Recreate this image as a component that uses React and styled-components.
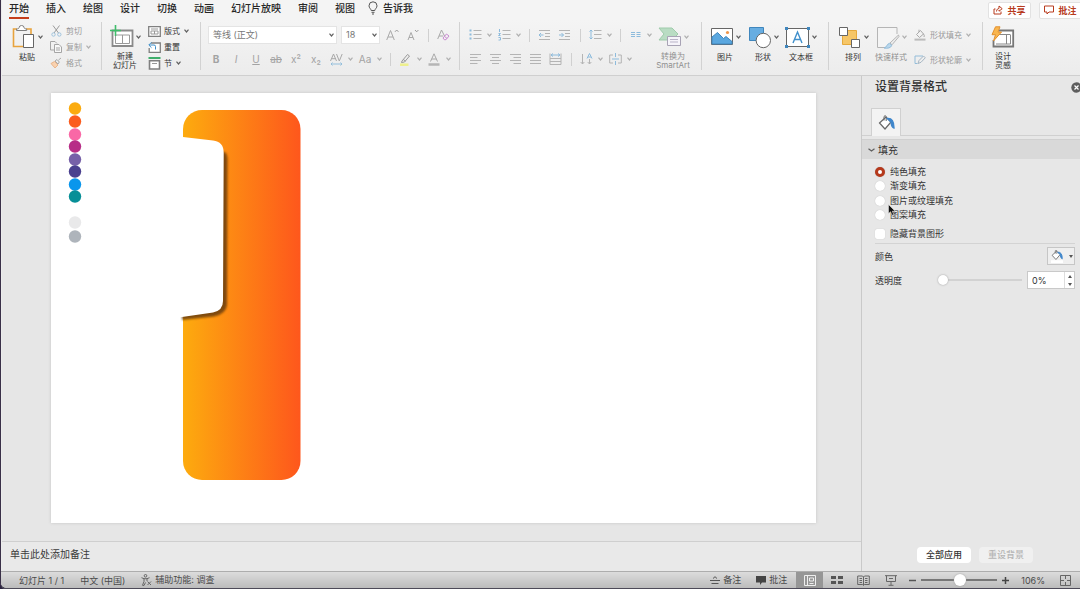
import React, { useState } from 'react';
import styled, { createGlobalStyle } from 'styled-components';

const GlobalStyle = createGlobalStyle`
  * {
    box-sizing: border-box;
  }
  body {
    margin: 0;
    background: #2b2440;
    font-family: Inter, "Noto Sans CJK SC", sans-serif;
    font-size: 9px;
    color: #333;
  }
  button, input, select {
    font-family: inherit;
    font-size: inherit;
    color: inherit;
    margin: 0;
    padding: 0;
    border: 0;
    background: none;
  }
  svg {
    display: block;
    flex: none;
  }
`;

const AppWindow = styled.div`
  display: flex;
  flex-direction: column;
  min-height: 100vh;
  padding-left: 1px;
  border-left: 1px solid #3a3048;
  border-bottom: 2px solid #4d4a58;
  border-bottom-left-radius: 7px;
  overflow: hidden;
  background: #ececec;
`;

const TopBar = styled.header`
  display: flex;
  align-items: center;
  justify-content: space-between;
  height: 20px;
  padding-left: 7px;
  background: #f4f4f4;
`;

const Tabs = styled.nav`
  display: flex;
  gap: 17px;
`;

const Tab = styled.a`
  height: 18px;
  border-bottom: 2px solid ${(props) => (props.$active ? '#c43e1c' : 'transparent')};
  color: #262626;
  font-size: 10px;
  font-weight: 500;
  line-height: 14px;
  text-decoration: none;
`;

const TellMe = styled.button`
  display: flex;
  gap: 5px;
  height: 14px;
  margin-left: -4px;
  color: #262626;
  font-size: 10px;
  font-weight: 500;
  line-height: 14px;
`;

const ShareGroup = styled.div`
  display: flex;
  gap: 8px;
  margin-right: -2px;
`;

const ShareButton = styled.button`
  display: flex;
  align-items: center;
  justify-content: center;
  gap: 4px;
  width: 43px;
  height: 17px;
  border: 1px solid #e2e2e2;
  border-radius: 2px;
  background: #fff;
  color: #b83b1d;
  font-weight: 700;
`;

const Ribbon = styled.div`
  display: flex;
  height: 56px;
  padding-top: 2px;
  border-bottom: 1px solid #cfcfcf;
  background: linear-gradient(#f4f4f4, #ececec);
`;

const Group = styled.section`
  display: flex;
  flex: none;
  width: ${(props) => props.$width}px;
  height: 48px;
  padding-left: ${(props) => props.$pad || 5}px;
  border-right: 1px solid ${(props) => (props.$last ? 'transparent' : '#d2d2d2')};
`;

const BigButton = styled.button`
  display: flex;
  flex-direction: column;
  align-items: center;
  width: ${(props) => props.$width || 38}px;
  height: 48px;
  padding-top: 2px;
  color: ${(props) => (props.$dim ? '#8f8f8f' : '#333')};
  font-size: 8px;
  line-height: 9px;
  white-space: nowrap;
`;

const BigIcon = styled.span`
  display: flex;
  align-items: center;
  gap: 2px;
  height: 26px;
  margin-bottom: 3px;
`;

const Stack = styled.div`
  display: flex;
  flex-direction: column;
  justify-content: ${(props) => (props.$spread ? 'space-between' : 'flex-start')};
  padding: ${(props) => (props.$spread ? '5px 0 2px 4px' : '1px 0 0 4px')};
`;

const SmallButton = styled.button`
  display: flex;
  align-items: center;
  gap: 4px;
  height: 16px;
  color: ${(props) => (props.$dim ? '#9a9a9a' : '#333')};
  font-size: 8px;
  line-height: 16px;
  white-space: nowrap;
`;

const SmallIcon = styled.span`
  display: flex;
  justify-content: center;
  width: 12px;
`;

const ToolRows = styled.div`
  display: flex;
  flex-direction: column;
  gap: 6px;
  padding-top: 4px;
`;

const ToolRow = styled.div`
  display: flex;
  align-items: center;
  height: 18px;
`;

const Tool = styled.button`
  display: flex;
  align-items: center;
  justify-content: center;
  width: 20px;
  height: 18px;
  color: #a3a3a3;
  font-size: 10px;
  font-weight: ${(props) => (props.$bold ? 700 : 400)};
  font-style: ${(props) => (props.$italic ? 'italic' : 'normal')};
  text-decoration: ${(props) => props.$line || 'none'};
`;

const MenuArrow = styled.button`
  display: flex;
  justify-content: center;
  width: 9px;
`;

const ToolDivider = styled.span`
  width: 1px;
  height: 13px;
  margin: 0 4px 0 6px;
  background: #d0d0d0;
`;

const SelectBox = styled.label`
  display: flex;
  align-items: center;
  width: ${(props) => props.$width}px;
  height: 18px;
  margin: 0 2px;
  padding: 0 2px 0 4px;
  border: 1px solid #e4e4e4;
  background: #fff;
  color: #777;

  select {
    flex: 1;
    min-width: 0;
    appearance: none;
    outline: none;
    font-size: 9px;
    line-height: 16px;
  }
`;

const Main = styled.main`
  display: flex;
  flex: 1;
`;

const Editor = styled.div`
  display: flex;
  flex: 1;
  flex-direction: column;
  min-width: 0;
`;

const Workspace = styled.div`
  flex: 1;
  padding: 17px 45px 18px 49px;
  background: #e6e6e6;
`;

const Slide = styled.div`
  background: #fff;
  box-shadow: 0 0 3px #c4c4c4;

  svg {
    width: 100%;
    height: auto;
  }
`;

const Notes = styled.div`
  height: 30px;
  padding-left: 8px;
  border-top: 1px solid #cfcfcf;
  background: #e9e9e9;
  color: #3a3a3a;
  font-size: 10px;
  line-height: 24px;
`;

const Panel = styled.aside`
  display: flex;
  flex-direction: column;
  flex: none;
  width: 219px;
  border-left: 1px solid #c9c9c9;
  background: #e7e7e7;
`;

const PanelHeader = styled.div`
  display: flex;
  align-items: center;
  justify-content: space-between;
  height: 22px;
  margin-right: -2px;
  padding-left: 13px;

  h2 {
    margin: 0;
    font-size: 12px;
    font-weight: 500;
    line-height: 22px;
  }
`;

const PanelTabs = styled.div`
  display: flex;
  height: 38px;
  padding: 10px 0 0 9px;
  border-bottom: 1px solid #d0d0d0;
`;

const PanelTab = styled.button`
  display: flex;
  align-items: center;
  justify-content: center;
  width: 30px;
  height: 28px;
  border: 1px solid #d0d0d0;
  border-bottom: 0;
  background: #f3f3f3;
`;

const SectionHeader = styled.button`
  display: flex;
  align-items: center;
  gap: 3px;
  height: 20px;
  margin-top: 3px;
  padding-left: 6px;
  border-top: 1px solid #d0d0d0;
  background: #d9d9d9;
  color: #333;
  font-size: 10px;
  line-height: 18px;
`;

const FillOptions = styled.div`
  position: relative;
  display: flex;
  flex-direction: column;
  margin: 6px 5px 0 13px;
  border-bottom: 1px solid #d3d3d3;
`;

const Option = styled.label`
  display: flex;
  align-items: center;
  gap: 5px;
  height: ${(props) => (props.$tall ? 18 : 14)}px;
  margin-top: ${(props) => (props.$tall ? 3 : 0)}px;
  line-height: 14px;

  &:nth-child(3) {
    margin-top: 1px;
  }

  input {
    appearance: none;
    width: 10px;
    height: 10px;
    background: #fff;
    box-shadow: 0 0 1px #b5b5b5;
  }
  input[type='radio'] {
    border-radius: 50%;
  }
  input[type='radio']:checked {
    border: 3px solid #b5391c;
  }
  input[type='checkbox'] {
    border-radius: 2px;
  }
  input[type='checkbox']:checked {
    background: #b5391c;
  }
`;

const Pointer = styled.span`
  position: absolute;
  left: 13px;
  top: 39px;
`;

const Field = styled.div`
  display: flex;
  align-items: center;
  justify-content: space-between;
  height: 24px;
  padding: 0 5px 0 13px;
`;

const ColorButton = styled.button`
  display: flex;
  align-items: center;
  justify-content: center;
  gap: 5px;
  width: 28px;
  height: 18px;
  border: 1px solid #c6c6c6;
  background: #efefef;
`;

const Range = styled.input`
  appearance: none;
  width: ${(props) => props.$width}px;
  height: 12px;

  &::-webkit-slider-runnable-track {
    height: 2px;
    background: ${(props) => props.$track};
  }
  &::-webkit-slider-thumb {
    appearance: none;
    width: ${(props) => props.$thumb}px;
    height: ${(props) => props.$thumb}px;
    margin-top: ${(props) => 1 - props.$thumb / 2}px;
    border-radius: 50%;
    background: #fff;
    box-shadow: 0 0 2px #999;
  }
`;

const FieldRange = styled.div`
  display: flex;
  flex: 1;
  justify-content: flex-end;
  padding-right: 5px;
`;

const Spinner = styled.div`
  display: flex;
  width: 48px;
  height: 18px;
  border: 1px solid #c9c9c9;
  background: #fff;

  input {
    flex: 1;
    min-width: 0;
    padding-left: 4px;
    outline: none;
  }
`;

const Steps = styled.div`
  display: flex;
  flex-direction: column;
  justify-content: space-around;
  width: 10px;
  border-left: 1px solid #ddd;

  button {
    display: flex;
    justify-content: center;
  }
`;

const PanelFooter = styled.div`
  display: flex;
  justify-content: flex-end;
  gap: 8px;
  margin-top: auto;
  padding: 0 47px 8px 0;
`;

const PillButton = styled.button`
  width: 54px;
  height: 16px;
  border-radius: 4px;
  background: ${(props) => (props.disabled ? '#f0f0f0' : '#fff')};
  color: ${(props) => (props.disabled ? '#b4b4b4' : '#333')};
  font-weight: 500;
  line-height: 16px;
`;

const StatusBar = styled.footer`
  display: flex;
  align-items: center;
  justify-content: space-between;
  height: 17px;
  margin-left: -1px;
  padding: 0 9px 0 18px;
  border-top: 1px solid #adadad;
  background: linear-gradient(#dcdcdc, #bcbcbc);
  color: #4a4a4a;
`;

const StatusSide = styled.div`
  display: flex;
  align-items: center;
  gap: ${(props) => props.$gap}px;
`;

const StatusButton = styled.button`
  display: flex;
  align-items: center;
  gap: 3px;
  height: 16px;
  line-height: 16px;
`;

const StatusToggles = styled.div`
  display: flex;
  gap: 15px;
  padding-right: 9px;
`;

const ViewButton = styled.button`
  display: flex;
  align-items: center;
  justify-content: center;
  width: 27px;
  height: 16px;
  background: ${(props) => (props.$active ? '#969696' : 'transparent')};
`;

const Zoom = styled.div`
  display: flex;
  align-items: center;
  gap: 5px;
  padding-left: 5px;

  output {
    margin: 0 10px 0 7px;
  }
`;

const Icon = ({ w, h, children, stroke = '#808080', ...rest }) => (
  <svg width={w} height={h} viewBox={`0 0 ${w} ${h}`} fill="none" stroke={stroke} aria-hidden="true" {...rest}>
    {children}
  </svg>
);

const Chevron = ({ dim, size = 5 }) => (
  <Icon w={size} h={4} stroke={dim ? '#b0b0b0' : '#606060'} strokeWidth="1.2">
    <path d={`M.5 .7 L${size / 2} 3 L${size - 0.5} .7`} />
  </Icon>
);

const More = ({ label }) => (
  <MenuArrow aria-label={label}>
    <Chevron dim />
  </MenuArrow>
);

const BulbIcon = () => (
  <Icon w={10} h={14} stroke="#555">
    <path d="M3.2 9.5 C3 7.8 1 7 1 4.8 A4 4 0 0 1 9 4.8 C9 7 7 7.8 6.8 9.5 Z M3.5 11.3 H6.5 M4 13 H6" />
  </Icon>
);

const ShareIcon = () => (
  <Icon w={10} h={10} stroke="#b83b1d">
    <path d="M2.5 4 H1 V9 H8 V6.5 M3.5 6.5 C3.7 4.2 5 3.4 6 3.4 V1 L9.2 3.7 L6 6.2 V4.800" />
  </Icon>
);

const CommentIcon = () => (
  <Icon w={10} h={10} stroke="#b83b1d">
    <path d="M.5 1 H9.5 V7 H5 L3 9 V7 H.5 Z" />
  </Icon>
);

const PasteIcon = () => (
  <Icon w={24} h={24}>
    <path d="M5 4 H1.5 V21.5 H11 M14 4 H19 V9" stroke="#e8a33d" strokeWidth="1.6" />
    <path d="M4.5 5.5 V4 C6 4 7 3.5 7.2 2.5 A2.4 2 0 0 1 12 2.5 C12.2 3.5 13.5 4 14.7 4 V5.5 Z" fill="#fff" />
    <path d="M11.5 9.5 H21.5 V22.5 H11.5 Z" fill="#fff" stroke="#666" />
  </Icon>
);

const CutIcon = () => (
  <Icon w={11} h={12} stroke="#9a9a9a">
    <path d="M2 .5 L7.5 8 M8.500 .5 L3 8" />
    <circle cx="2.5" cy="9.5" r="1.7" stroke="#9fc3dd" />
    <circle cx="8.3" cy="9.5" r="1.7" stroke="#9fc3dd" />
  </Icon>
);

const CopyIcon = () => (
  <Icon w={12} h={12} stroke="#a5a5a5">
    <path d="M4 9 H.5 V.5 H5 L7 2.5" />
    <path d="M4.5 3.5 H9 L11.5 6 V11.5 H4.5 Z M6 7 H10 M6 9 H10" fill="#f8f8f8" />
  </Icon>
);

const BrushIcon = () => (
  <Icon w={12} h={12} stroke="#aaa">
    <path d="M1 6.5 L4.5 4.5 L8 8 L5 11 Z" fill="#f9d2b0" stroke="#e9b58c" />
    <path d="M5 4 L7 2.5 L9.3 5 L8 7 Z M8.5 3 L11 1" fill="#eee" />
  </Icon>
);

const NewSlideIcon = () => (
  <Icon w={24} h={23}>
    <path d="M2.5 5.5 H22.5 V21 H2.5 Z" fill="#fff" stroke="#8a8a8a" strokeWidth="1.8" />
    <path d="M5.500 10 H19.500 V18.500 H5.500 Z M12.500 10 V18.500" stroke="#9a9a9a" />
    <path d="M0 5.500 H11 M5.500 0 V11" stroke="#3fbe6b" strokeWidth="1.6" />
  </Icon>
);

const LayoutIcon = () => (
  <Icon w={13} h={11}>
    <path d="M.7 .7 H12.3 V10.3 H.7 Z" fill="#fff" strokeWidth="1.3" />
    <path d="M3 3 H10 M3 5 H10 V8 H3 Z M6.5 5 V8" stroke="#999" />
  </Icon>
);

const ResetIcon = () => (
  <Icon w={13} h={12}>
    <path d="M3 2 H12.3 V11.3 H1.2 V7" fill="#fff" strokeWidth="1.3" />
    <path d="M7.5 8.5 V5.5 Q7.5 4 6 4 H1 M3.5 1.3 L.8 4 L3.5 6.7" stroke="#3f8fcb" />
  </Icon>
);

const SectionIcon = () => (
  <Icon w={13} h={13}>
    <path d="M.5 1 H12.5" stroke="#3fae6b" strokeWidth="2" />
    <path d="M1.500 3.700 H11.500 V12 H1.500 Z" fill="#fff" strokeWidth="1.6" />
    <path d="M4 6.500 H9" stroke="#999" />
  </Icon>
);

const FontSizeIcon = ({ up }) => (
  <Icon w={13} h={12} stroke="#a8a8a8">
    <path d={up ? 'M.7 11 L4.5 1.5 L8.3 11 M2 8 H7' : 'M2 11 L5 3.5 L8 11 M3 8.5 H7'} />
    <path d={up ? 'M9 2.8 L10.7 1 L12.4 2.8' : 'M9 1 L10.7 2.8 L12.4 1'} stroke="#9a9a9a" />
  </Icon>
);

const ClearFormatIcon = () => (
  <Icon w={13} h={12} stroke="#a8a8a8">
    <path d="M.7 10 L4.5 1 L7.5 7 M2 7 H6" />
    <path d="M6 9 L9.5 5 L12 7 L9 10.7 H7.3 Z M7.5 7.3 L10 9.5" stroke="#c98ad0" />
  </Icon>
);

const SpacingIcon = () => (
  <Icon w={13} h={13} stroke="#a8a8a8">
    <path d="M.5 8 L3.5 1 L6.5 8 M1.5 5.7 H5.5 M6.5 1 L9.3 8 L12.2 1" />
    <path d="M1 11 H12 M2.5 9.5 L1 11 L2.5 12.5 M10.5 9.5 L12 11 L10.5 12.5" stroke="#94bfdc" />
  </Icon>
);

const HighlightIcon = () => (
  <Icon w={12} h={13} stroke="#999">
    <path d="M3 8 L8.5 1.5 L10.5 3 L5.5 9 L2.5 9.5 Z M4.2 6.5 L6.5 8" />
    <path d="M1 11.7 H9.5" stroke="#eef08c" strokeWidth="2.5" />
  </Icon>
);

const FontColorIcon = () => (
  <Icon w={12} h={13} stroke="#a8a8a8">
    <path d="M2.5 8.5 L6 .8 L9.5 8.5 M3.7 6 H8.3" />
    <path d="M.5 11.5 H11.5" stroke="#b5b5b5" strokeWidth="2.5" />
  </Icon>
);

const LinesIcon = ({ d, accent, dots }) => (
  <Icon w={13} h={12} stroke="#b4b4b4" strokeWidth="1">
    {d && <path d={d} />}
    {accent && <path d={accent} stroke="#8dbbdc" />}
    {dots && <path d="M.5 1.5 H2.5 M.5 5.5 H2.5 M.5 9.5 H2.5" stroke="#8dbbdc" strokeWidth={dots} />}
  </Icon>
);

const SmartArtIcon = () => (
  <Icon w={24} h={20}>
    <path d="M1 1 H14 L20 7 L14 13 H1 L6 7 Z" fill="#b9dcc3" stroke="#9fcbab" />
    <path d="M9.5 9.5 H22.5 V18.5 H9.5 Z" fill="#f6f4fa" stroke="#a8a3b5" />
    <path d="M12 12.5 H20 M12 15 H20" stroke="#b9b3c7" />
  </Icon>
);

const PictureIcon = () => (
  <Icon w={24} h={20}>
    <path d="M1.5 1.5 H22.5 V17.5 H1.5 Z" fill="#fff" stroke="#666" />
    <path d="M2 10 L7.500 5.500 L13.500 11.500 L16 9.500 L22 14.500 V17 H2 Z" fill="#5aa7df" stroke="#3f86bd" />
    <circle cx="17.5" cy="5.5" r="1.6" fill="#f0964a" stroke="none" />
  </Icon>
);

const ShapesIcon = () => (
  <Icon w={24} h={23}>
    <path d="M1.5 1.5 H15.5 V14.5 H1.5 Z" fill="#67ade1" stroke="#3f86bd" />
    <circle cx="15.3" cy="14.5" r="7.2" fill="#fff" stroke="#666" />
  </Icon>
);

const TextBoxIcon = () => (
  <Icon w={25} h={21}>
    <path d="M1.5 1.5 H23.5 V19.5 H1.5 Z" fill="#fff" stroke="#666" />
    <path d="M8 16 L12.5 5 L17 16 M9.5 12.5 H15.5" stroke="#3f8fcb" strokeWidth="1.4" />
    <path d="M0 0 h3 v3 h-3 Z M22 0 h3 v3 h-3 Z M0 18 h3 v3 h-3 Z M22 18 h3 v3 h-3 Z" fill="#3f86bd" stroke="none" />
  </Icon>
);

const ArrangeIcon = () => (
  <Icon w={24} h={23}>
    <path d="M4.5 4.5 H18.5 V18.5 H4.5 Z" fill="#f6c667" stroke="#e5a93c" />
    <path d="M1.5 1.5 H9.5 V9.5 H1.5 Z M13.5 13.5 H21.5 V21.5 H13.5 Z" fill="#fff" stroke="#666" />
  </Icon>
);

const QuickStyleIcon = () => (
  <Icon w={24} h={23} stroke="#b5b5b5">
    <path d="M21 8 V1.5 H1.5 V21.5 H10" fill="#f4f4f4" />
    <path d="M22.5 9 L14 17 L16 18.8 L23 10.5 Z" fill="#eee" />
    <path d="M8 22 C11 21.5 10.5 18 13.5 17.3 L15.8 19.3 C15 22 11.5 22.7 8 22 Z" fill="#b9d7ec" stroke="#93bcd9" />
  </Icon>
);

const ShapeFillIcon = () => (
  <Icon w={12} h={12} stroke="#a8a8a8">
    <path d="M2.5 5.5 L6.5 1.5 L9.5 5 L5.5 8.5 Z M5 3 V.7 M9.5 5 Q10.8 6.5 10 8" />
    <path d="M.5 10.6 H11.5" stroke="#bbb" strokeWidth="2" />
  </Icon>
);

const ShapeOutlineIcon = () => (
  <Icon w={12} h={10} stroke="#93bcd9">
    <path d="M9 1 H1 V8.5 H3.5" />
    <path d="M4 8.5 L5 5.5 L9.5 1 L11.3 2.8 L7 7.3 Z" stroke="#a5b5c2" />
  </Icon>
);

const DesignIcon = () => (
  <Icon w={24} h={22}>
    <path d="M8 4.5 H22.2 V20.5 H2.5 V14" fill="#fff" stroke="#777" strokeWidth="1.8" />
    <path d="M8 8.5 H19 M15.5 8.5 V18 M5 18 H19.5 V8.5" stroke="#888" />
    <path d="M4.5 .8 H9 L7 6 H10.5 L2.5 15 L4.5 8.7 H1 Z" fill="#f9b64f" stroke="#e2902e" />
  </Icon>
);

const CloseIcon = () => (
  <Icon w={11} h={11}>
    <circle cx="5.5" cy="5.5" r="5.2" fill="#5e5e5e" stroke="none" />
    <path d="M3.5 3.5 L7.5 7.5 M7.5 3.5 L3.5 7.5" stroke="#fff" strokeWidth="1.2" />
  </Icon>
);

const BucketIcon = ({ size = 17, swatch }) => (
  <svg width={size} height={size} viewBox={swatch ? '0 0 17 20' : '0 0 17 17'} fill="none" stroke="#666" aria-hidden="true">
    <path d="M1.5 9 L8 3 L13 8 L7 15 Z" fill="#fff" strokeWidth="1.2" />
    <path d="M6 6.5 V2.5 Q7 .7 8.2 2.5 V7" />
    <path d="M9.500 4.500 Q16 4 16 14 Q13.500 13.500 13 8 Z" fill="#3f86cb" stroke="#3f86cb" strokeWidth="1.4" />
    {swatch && <path d="M0 18 H17" stroke="#fff" strokeWidth="4" />}
  </svg>
);

const AccessibilityIcon = () => (
  <Icon w={11} h={12} stroke="#666">
    <circle cx="4.500" cy="1.800" r="1.300" />
    <path d="M.5 3.700 L3 4.700 V7.500 L1.500 11.300 L3 11.500 L4.500 8.500 M8.500 3.700 L6 4.700 V7 M3 4.700 H6" />
    <path d="M6.500 7.500 L10 11 M10 7.500 L6.500 11" />
  </Icon>
);

const lines = {
  list: 'M4.5 1.5 H12.5 M4.5 5.5 H12.5 M4.5 9.5 H12.5',
  left: 'M1 1.5 H12 M1 4.5 H8.5 M1 7.5 H12 M1 10.5 H8.5',
  center: 'M1 1.5 H12 M3 4.5 H10 M1 7.5 H12 M3 10.5 H10',
  right: 'M1 1.5 H12 M4.5 4.5 H12 M1 7.5 H12 M4.5 10.5 H12',
  full: 'M1 1.5 H12 M1 4.5 H12 M1 7.5 H12 M1 10.5 H12',
  spread: 'M1 .5 V11.5 M12 .5 V11.5 M1 5.5 H12 M1 8.5 H12 M1 11.5 H12',
  indent: 'M1 1.5 H12 M7 4.5 H12 M7 7.5 H12 M1 10.5 H12',
  spacing: 'M5 1.5 H12.5 M5 5.5 H12.5 M5 9.5 H12.5',
  direction: 'M2.5 1 V11 M.7 9 L2.5 11 L4.3 9 M9.5 6 V11 M7.7 9 L9.5 11 L11.3 9',
  middle: 'M4 2 H.7 V10 H4 M9 2 H12.3 V10 H9',
};

const swatches = [
  ['#fbab0f', 15],
  ['#fb5c1e', 28],
  ['#f968a6', 41],
  ['#b72e87', 53],
  ['#7660a8', 66],
  ['#4a408f', 78],
  ['#0a96ec', 91],
  ['#078f97', 103],
  ['#e9e9ea', 129],
  ['#aeb4bb', 143],
];

const SlideDrawing = () => (
  <svg viewBox="0 0 765 430" role="img" aria-label="幻灯片 1">
    <defs>
      <linearGradient id="orange">
        <stop offset="0" stopColor="#fdab0e" />
        <stop offset="1" stopColor="#fe571c" />
      </linearGradient>
      <filter id="soft" x="-20%" y="-20%" width="140%" height="140%">
        <feGaussianBlur stdDeviation="1.2" />
      </filter>
    </defs>
    {swatches.map(([color, y]) => (
      <circle key={color} cx="24" cy={y + 0.5} r="6.2" fill={color} />
    ))}
    <rect x="132" y="17" width="117.5" height="370" rx="19" fill="url(#orange)" />
    <path
      d="M133 60 H168 Q176 56 176.500 66 L176 212 Q175 221 163 223.500 L131 227 Z"
      fill="#6b3d08"
      opacity=".85"
      filter="url(#soft)"
    />
    <path
      d="M122 43.500 L132 44 L162 47.500 Q172.700 48.500 172.700 60 L172 208 Q172 217.500 162 219.500 L131 224 L122 225 Z"
      fill="#fff"
    />
  </svg>
);

const tabs = ['开始', '插入', '绘图', '设计', '切换', '动画', '幻灯片放映', '审阅', '视图'];
const fills = ['纯色填充', '渐变填充', '图片或纹理填充', '图案填充'];

const Big = ({ icon, dim, width, arrow = true, children }) => (
  <BigButton $dim={dim} $width={width}>
    <BigIcon>
      {icon}
      {arrow && <Chevron dim={dim} />}
    </BigIcon>
    {children}
  </BigButton>
);

const Small = ({ icon, dim, arrow, children }) => (
  <SmallButton $dim={dim}>
    <SmallIcon>{icon}</SmallIcon>
    {children}
    {arrow && <Chevron dim={dim} />}
  </SmallButton>
);

const FontGroup = () => (
  <Group $width={259} $pad={5}>
    <ToolRows>
      <ToolRow>
        <SelectBox $width={129}>
          <select aria-label="字体" defaultValue="等线 (正文)">
            <option>等线 (正文)</option>
          </select>
          <Chevron />
        </SelectBox>
        <SelectBox $width={39}>
          <select aria-label="字号" defaultValue="18">
            <option>18</option>
          </select>
          <Chevron />
        </SelectBox>
        <Tool aria-label="增大字号"><FontSizeIcon up /></Tool>
        <Tool aria-label="减小字号"><FontSizeIcon /></Tool>
        <ToolDivider />
        <Tool aria-label="清除格式"><ClearFormatIcon /></Tool>
      </ToolRow>
      <ToolRow>
        <Tool $bold>B</Tool>
        <Tool $italic>I</Tool>
        <Tool $line="underline">U</Tool>
        <Tool $line="line-through">ab</Tool>
        <Tool>x²</Tool>
        <Tool>x₂</Tool>
        <Tool aria-label="字符间距"><SpacingIcon /></Tool>
        <More label="字符间距选项" />
        <Tool>Aa</Tool>
        <More label="大小写选项" />
        <ToolDivider />
        <Tool aria-label="突出显示"><HighlightIcon /></Tool>
        <More label="突出显示颜色" />
        <Tool aria-label="字体颜色"><FontColorIcon /></Tool>
        <More label="更多字体颜色" />
      </ToolRow>
    </ToolRows>
  </Group>
);

const ParagraphGroup = () => (
  <Group $width={242} $pad={5}>
    <ToolRows>
      <ToolRow>
        <Tool aria-label="项目符号"><LinesIcon d={lines.list} dots={2} /></Tool>
        <More label="项目符号选项" />
        <Tool aria-label="编号"><LinesIcon d={lines.list} accent="M1.500 0 V3 M.5 4.500 H2.500 L.5 6.500 H2.500 M.5 8.500 H2.500 V11 H.5" /></Tool>
        <More label="编号选项" />
        <ToolDivider />
        <Tool aria-label="减少缩进"><LinesIcon d={lines.indent} accent="M5.500 6 H1 M3 4 L1 6 L3 8" /></Tool>
        <Tool aria-label="增加缩进"><LinesIcon d={lines.indent} accent="M1 6 H5.500 M3.500 4 L5.500 6 L3.500 8" /></Tool>
        <ToolDivider />
        <Tool aria-label="行距"><LinesIcon d={lines.spacing} accent="M2 1 V10 M.5 2.500 L2 1 L3.500 2.500 M.5 8.500 L2 10 L3.500 8.500" /></Tool>
        <More label="行距选项" />
        <ToolDivider />
        <Tool aria-label="分栏"><LinesIcon accent="M2 3.500 H6 M2 5.500 H6 M2 7.500 H6 M7.500 3.500 H11.500 M7.500 5.500 H11.500 M7.500 7.500 H11.500" /></Tool>
        <More label="分栏选项" />
      </ToolRow>
      <ToolRow>
        <Tool aria-label="左对齐"><LinesIcon d={lines.left} /></Tool>
        <Tool aria-label="居中"><LinesIcon d={lines.center} /></Tool>
        <Tool aria-label="右对齐"><LinesIcon d={lines.right} /></Tool>
        <Tool aria-label="两端对齐"><LinesIcon d={lines.full} /></Tool>
        <Tool aria-label="分散对齐"><LinesIcon d={lines.spread} accent="M2 2 H11 M4 .5 L2 2 L4 3.500 M9 .5 L11 2 L9 3.500" /></Tool>
        <ToolDivider />
        <Tool aria-label="文字方向"><LinesIcon d={lines.direction} accent="M7 5.500 L9.500 .5 L12 5.500 M8 4 H11" /></Tool>
        <More label="文字方向选项" />
        <Tool aria-label="对齐文本"><LinesIcon d={lines.middle} accent="M6.500 0 V4 M6.500 8 V12 M3 6 H10" /></Tool>
        <More label="对齐文本选项" />
      </ToolRow>
    </ToolRows>
    <Big dim width={38} icon={<SmartArtIcon />}>
      <span>转换为</span>
      <span>SmartArt</span>
    </Big>
  </Group>
);

const FormatPanel = () => {
  const [fill, setFill] = useState(fills[0]);
  const [opacity, setOpacity] = useState(0);

  return (
    <Panel>
      <PanelHeader>
        <h2>设置背景格式</h2>
        <button aria-label="关闭"><CloseIcon /></button>
      </PanelHeader>
      <PanelTabs>
        <PanelTab aria-label="填充"><BucketIcon /></PanelTab>
      </PanelTabs>
      <SectionHeader>
        <Chevron size={7} />
        填充
      </SectionHeader>
      <FillOptions>
        {fills.map((name) => (
          <Option key={name}>
            <input type="radio" name="fill" checked={fill === name} onChange={() => setFill(name)} />
            {name}
          </Option>
        ))}
        <Option $tall>
          <input type="checkbox" />
          隐藏背景图形
        </Option>
        <Pointer>
          <svg width="8" height="12" viewBox="0 0 8 12" fill="#111" stroke="#eee" strokeWidth=".5">
            <path d="M.5 .5 V9.500 L2.600 7.700 L4 11.300 L5.700 10.600 L4.300 7.200 H7.200 Z" />
          </svg>
        </Pointer>
      </FillOptions>
      <Field>
        <span>颜色</span>
        <ColorButton aria-label="颜色">
          <BucketIcon size={14} swatch />
          <Icon w={4} h={3} stroke="none"><path d="M0 0 H4 L2 3 Z" fill="#555" /></Icon>
        </ColorButton>
      </Field>
      <Field>
        <label htmlFor="opacity">透明度</label>
        <FieldRange>
          <Range
            id="opacity"
            type="range"
            $width={84}
            $thumb={10}
            $track="#d2d2d2"
            value={opacity}
            onChange={(e) => setOpacity(e.target.value)}
          />
        </FieldRange>
        <Spinner>
          <input aria-label="透明度百分比" value={`${opacity}%`} readOnly />
          <Steps>
            <button aria-label="增加"><Icon w={4} h={3} stroke="none"><path d="M0 3 H4 L2 0 Z" fill="#555" /></Icon></button>
            <button aria-label="减少"><Icon w={4} h={3} stroke="none"><path d="M0 0 H4 L2 3 Z" fill="#555" /></Icon></button>
          </Steps>
        </Spinner>
      </Field>
      <PanelFooter>
        <PillButton>全部应用</PillButton>
        <PillButton disabled>重设背景</PillButton>
      </PanelFooter>
    </Panel>
  );
};

const Status = () => (
  <StatusBar>
    <StatusSide $gap={16}>
      <span>幻灯片 1 / 1</span>
      <span>中文 (中国)</span>
      <StatusButton><AccessibilityIcon />辅助功能: 调查</StatusButton>
    </StatusSide>
    <StatusSide $gap={0}>
      <StatusToggles>
        <StatusButton>
          <Icon w={10} h={9} stroke="#555"><path d="M3 2.500 L5 .7 L7 2.500 M0 4.500 H10 M1.500 7.500 H8.500" /></Icon>
          备注
        </StatusButton>
        <StatusButton>
          <Icon w={10} h={9} stroke="none"><path d="M0 0 H10 V6.500 H6 L4 9 V6.500 H0 Z" fill="#444" /></Icon>
          批注
        </StatusButton>
      </StatusToggles>
      <ViewButton $active aria-label="普通">
        <Icon w={12} h={11} stroke="#eee"><path d="M.5 .5 H11.500 V10.500 H.5 Z M3.500 .5 V10.500 M5.500 3 H9.500 V6 H5.500 Z M5.500 8.500 H9.500" /></Icon>
      </ViewButton>
      <ViewButton aria-label="幻灯片浏览">
        <Icon w={12} h={10} stroke="none"><path d="M0 1 H5 V4 H0 Z M7 1 H12 V4 H7 Z M0 6 H5 V9 H0 Z M7 6 H12 V9 H7 Z" fill="#555" /></Icon>
      </ViewButton>
      <ViewButton aria-label="阅读视图">
        <Icon w={13} h={11} stroke="#666"><path d="M.7 1 H5.500 L6.500 2 L7.500 1 H12.300 V9.500 H7.500 L6.500 10.500 L5.500 9.500 H.7 Z M6.500 2 V10 M2.500 3.500 H5 M2.500 5.500 H5 M2.500 7.500 H5 M8 3.500 H10.500 M8 5.500 H10.500 M8 7.500 H10.500" /></Icon>
      </ViewButton>
      <ViewButton aria-label="幻灯片放映">
        <Icon w={12} h={11} stroke="#666"><path d="M0 .7 H12 M1.500 .7 V6.500 H10.500 V.7 M6 6.500 V10 M3.500 10.300 H8.500 M4 3.500 H8" /></Icon>
      </ViewButton>
      <Zoom>
        <button aria-label="缩小"><Icon w={7} h={7} stroke="#555"><path d="M0 3.500 H7" strokeWidth="1.500" /></Icon></button>
        <Range aria-label="缩放" type="range" $width={76} $thumb={12} $track="#777" defaultValue={51} />
        <button aria-label="放大"><Icon w={7} h={7} stroke="#444"><path d="M0 3.500 H7 M3.500 0 V7" strokeWidth="1.500" /></Icon></button>
        <output>106%</output>
        <button aria-label="适应窗口">
          <Icon w={11} h={11} stroke="#666"><path d="M.5 .5 H10.500 V10.500 H.5 Z M5.500 1 V4 M5.500 7 V10 M1 5.500 H4 M7 5.500 H10" /></Icon>
        </button>
      </Zoom>
    </StatusSide>
  </StatusBar>
);

const App = () => {
  return (
    <>
      <GlobalStyle />
      <AppWindow>
        <TopBar>
          <Tabs>
            {tabs.map((name, index) => (
              <Tab key={name} href="#" $active={index === 0}>{name}</Tab>
            ))}
            <TellMe><BulbIcon />告诉我</TellMe>
          </Tabs>
          <ShareGroup>
            <ShareButton><ShareIcon />共享</ShareButton>
            <ShareButton><CommentIcon />批注</ShareButton>
          </ShareGroup>
        </TopBar>
        <Ribbon>
          <Group $width={100} $pad={6}>
            <Big width={38} icon={<PasteIcon />}>粘贴</Big>
            <Stack>
              <Small dim icon={<CutIcon />}>剪切</Small>
              <Small dim arrow icon={<CopyIcon />}>复制</Small>
              <Small dim icon={<BrushIcon />}>格式</Small>
            </Stack>
          </Group>
          <Group $width={99} $pad={4}>
            <Big width={38} icon={<NewSlideIcon />}>
              <span>新建</span>
              <span>幻灯片</span>
            </Big>
            <Stack>
              <Small arrow icon={<LayoutIcon />}>版式</Small>
              <Small icon={<ResetIcon />}>重置</Small>
              <Small arrow icon={<SectionIcon />}>节</Small>
            </Stack>
          </Group>
          <FontGroup />
          <ParagraphGroup />
          <Group $width={127} $pad={4}>
            <Big icon={<PictureIcon />}>图片</Big>
            <Big icon={<ShapesIcon />}>形状</Big>
            <Big icon={<TextBoxIcon />}>文本框</Big>
          </Group>
          <Group $width={154} $pad={5}>
            <Big icon={<ArrangeIcon />}>排列</Big>
            <Big dim icon={<QuickStyleIcon />}>快速样式</Big>
            <Stack $spread>
              <Small dim arrow icon={<ShapeFillIcon />}>形状填充</Small>
              <Small dim arrow icon={<ShapeOutlineIcon />}>形状轮廓</Small>
            </Stack>
          </Group>
          <Group $width={60} $pad={1} $last>
            <Big arrow={false} icon={<DesignIcon />}>
              <span>设计</span>
              <span>灵感</span>
            </Big>
          </Group>
        </Ribbon>
        <Main>
          <Editor>
            <Workspace>
              <Slide><SlideDrawing /></Slide>
            </Workspace>
            <Notes>单击此处添加备注</Notes>
          </Editor>
          <FormatPanel />
        </Main>
        <Status />
      </AppWindow>
    </>
  );
};

export default App;
